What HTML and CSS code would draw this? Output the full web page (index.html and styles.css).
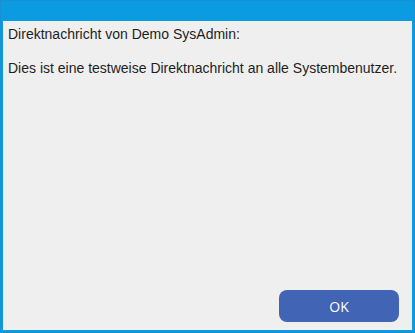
FILE: index.html
```html
<!DOCTYPE html>
<html lang="de">
<head>
  <meta charset="UTF-8" />
  <title>Direktnachricht</title>
  <link rel="stylesheet" href="styles.css">
</head>
<body>
  <div class="dialog">
    <div class="titlebar"></div>
    <div class="content">
      <p>Direktnachricht von Demo SysAdmin:</p>
      <p>Dies ist eine testweise Direktnachricht an alle Systembenutzer.</p>
    </div>
    <div class="footer">
      <button class="ok">OK</button>
    </div>
  </div>
</body>
</html>
```

FILE: styles.css
```css
* {
  box-sizing: border-box;
}

html, body {
  margin: 0;
  padding: 0;
  height: 100%;
}

body {
  font-family: 'Liberation Sans', Arial, sans-serif;
  background: #0a9be0;
}

.dialog {
  height: 333px;
  display: flex;
  flex-direction: column;
  background: #0a9be0;
  border: 1px solid #1790d6;
  padding: 0 2px 2px 2px;
}

.titlebar {
  height: 20px;
  flex: none;
}

.content {
  flex: 1;
  background: #efefef;
  padding: 5px 5px 0 5px;
  color: #1e1e1e;
  font-size: 14px;
}

.content p {
  margin: 0 0 18px 0;
  line-height: 16px;
}

.footer {
  background: #efefef;
  display: flex;
  justify-content: flex-end;
  padding: 0 13px 8px 0;
}

.ok {
  width: 120px;
  height: 32px;
  border: none;
  border-radius: 8px;
  background: #4264b4;
  color: #fff;
  font-family: 'Open Sans', sans-serif;
  font-size: 14px;
}
```
